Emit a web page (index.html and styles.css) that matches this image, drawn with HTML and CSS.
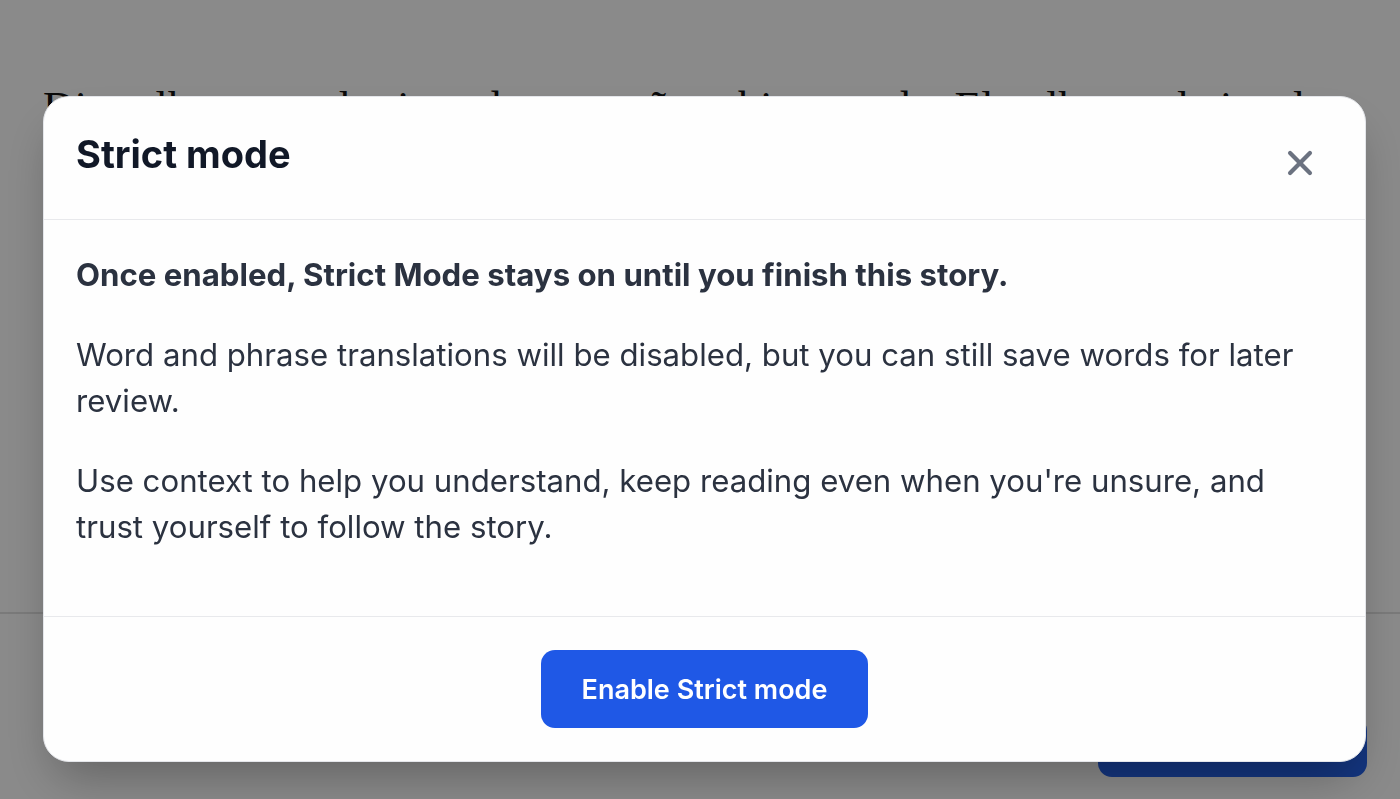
FILE: index.html
```html
<!DOCTYPE html>
<html lang="en">
<head>
    <meta charset="UTF-8">
    <meta name="viewport" content="width=device-width, initial-scale=1.0">
    <title>Strict mode</title>
    <link rel="stylesheet" href="styles.css">
</head>
<body>
    <div class="page">
        <div class="story">
            <p>Disse-lhe que voltaria cedo, mas não sabia quando. Ele olhou pela janela e sorriu.</p>
        </div>
        <div class="story-footer">
            <div class="next-button"></div>
        </div>
    </div>

    <div class="overlay">
        <div class="modal">
            <div class="modal-header">
                <h2 class="modal-title">Strict mode</h2>
                <div class="close-button">
                    <svg width="34" height="34" viewBox="0 0 24 24" fill="none" stroke="currentColor" stroke-width="3" stroke-linecap="round">
                        <path d="M5 5 L19 19" />
                        <path d="M19 5 L5 19" />
                    </svg>
                </div>
            </div>
            <div class="modal-body">
                <p class="lead">Once enabled, Strict Mode stays on until you finish this story.</p>
                <p>Word and phrase translations will be disabled, but you can still save words for later review.</p>
                <p>Use context to help you understand, keep reading even when you're unsure, and trust yourself to follow the story.</p>
            </div>
            <div class="modal-footer">
                <div class="primary-button">Enable Strict mode</div>
            </div>
        </div>
    </div>
</body>
</html>
```

FILE: styles.css
```css
body {
    margin: 0;
    background: #ffffff;
    font-family: Inter, "Noto Sans", sans-serif;
}
.page {
    display: flex;
    flex-direction: column;
    height: 100vh;
}
.story {
    flex: 1;
    padding: 0 43px;
    overflow: hidden;
}
.story p {
    margin: 82px 0 0;
    font-family: "Liberation Serif", serif;
    font-size: 44px;
    line-height: 1.2;
    color: #111111;
}
.story-footer {
    border-top: 2px solid #e2e2e2;
    height: 187px;
    display: flex;
    justify-content: flex-end;
    align-items: flex-end;
    padding: 0 33px 22px;
    box-sizing: border-box;
}
.next-button {
    width: 269px;
    height: 60px;
    background: #2563eb;
    border-radius: 14px;
}

.overlay {
    position: fixed;
    inset: 0;
    background: rgba(0, 0, 0, 0.46);
    display: flex;
    align-items: flex-start;
    padding: 96px 34px 0 43px;
}
.modal {
    width: 100%;
    background: #fefefe;
    border: 1px solid #e4e6ea;
    border-radius: 26px;
    box-shadow: 0 25px 50px -12px rgba(0, 0, 0, 0.3);
    display: flex;
    flex-direction: column;
    box-sizing: border-box;
}
.modal-header {
    height: 123px;
    box-sizing: border-box;
    border-bottom: 1px solid #e8e9ec;
    display: flex;
    align-items: center;
    justify-content: space-between;
    padding: 0 48px 0 32px;
}
.modal-title {
    margin: -8px 0 0;
    font-size: 38px;
    font-weight: 700;
    color: #111827;
}
.close-button {
    color: #6b7280;
    display: flex;
    margin-top: 10px;
}
.modal-body {
    padding: 32px 32px 66px;
    font-size: 31.2px;
    line-height: 46px;
    color: #2b3240;
}
.modal-body p {
    margin: 0 0 34px;
}
.modal-body p:last-child {
    margin-bottom: 0;
}
.modal-body .lead {
    font-weight: 700;
}
.modal-footer {
    border-top: 1px solid #e8e9ec;
    padding: 33px 0 33px;
    display: flex;
    justify-content: center;
}
.primary-button {
    width: 327px;
    height: 78px;
    border-radius: 14px;
    background: #1f58e6;
    color: #ffffff;
    font-size: 27px;
    font-weight: 600;
    display: flex;
    align-items: center;
    justify-content: center;
}
```
